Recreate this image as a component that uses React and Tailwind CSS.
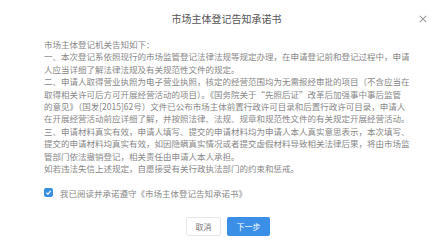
import React, { useState } from "react";

const lines = [
  "市场主体登记机关告知如下：",
  "一、本次登记系依照现行的市场监管登记法律法规等规定办理，在申请登记前和登记过程中，申请",
  "人应当详细了解法律法规及有关规范性文件的规定。",
  "二、申请人取得营业执照为电子营业执照，核定的经营范围均为无需报经审批的项目（不含应当在",
  "取得相关许可后方可开展经营活动的项目）。《国务院关于“先照后证”改革后加强事中事后监管",
  "的意见》（国发[2015]62号）文件已公布市场主体前置行政许可目录和后置行政许可目录，申请人",
  "在开展经营活动前应详细了解，并按照法律、法规、规章和规范性文件的有关规定开展经营活动。",
  "三、申请材料真实有效，申请人填写、提交的申请材料均为申请人本人真实意思表示，本次填写、",
  "提交的申请材料均真实有效，如因隐瞒真实情况或者提交虚假材料导致相关法律后果，将由市场监",
  "管部门依法撤销登记，相关责任由申请人本人承担。",
  "如若违法失信上述规定，自愿接受有关行政执法部门的约束和惩戒。",
];

export default function App() {
  const [agreed, setAgreed] = useState(true);

  return (
    <div
      className="w-[441px] h-[245px] bg-white overflow-hidden"
      style={{ fontFamily: '"Noto Sans CJK SC", "Noto Sans", sans-serif' }}
    >
      {/* Header */}
      <div className="relative h-[38px] flex items-center justify-center pl-[12px]">
        <h2 className="text-[10px] text-[#555] leading-none">市场主体登记告知承诺书</h2>
        <button className="absolute right-[14px] top-[15px] text-[#999]">
          <svg width="8" height="8" viewBox="0 0 10 10">
            <path d="M1 1L9 9M9 1L1 9" stroke="currentColor" strokeWidth="1.3" />
          </svg>
        </button>
      </div>

      {/* Notice text */}
      <div className="pl-[44px] text-[8.5px] leading-[12.4px] text-[#888] whitespace-nowrap">
        {lines.map((line, i) => (
          <p key={i}>{line}</p>
        ))}
      </div>

      {/* Agree checkbox */}
      <label className="mt-[14px] pl-[44px] flex items-center gap-[7px] cursor-pointer">
        <span
          onClick={() => setAgreed(!agreed)}
          className={`w-[9px] h-[9px] rounded-[2px] flex items-center justify-center ${
            agreed ? "bg-[#3b8fe0]" : "border border-[#ccc] bg-white"
          }`}
        >
          {agreed && (
            <svg width="7" height="7" viewBox="0 0 10 10">
              <path d="M2 5.2L4.2 7.3L8.2 2.8" stroke="white" strokeWidth="1.6" fill="none" />
            </svg>
          )}
        </span>
        <span className="text-[8.5px] leading-none text-[#888]">
          我已阅读并承诺遵守《市场主体登记告知承诺书》
        </span>
      </label>

      {/* Buttons */}
      <div className="mt-[20px] flex justify-center gap-[6px] pl-[15px]">
        <button className="w-[35px] h-[19px] rounded-[2px] border border-[#e8e8e8] bg-white text-[8px] text-[#777]">
          取消
        </button>
        <button className="w-[43px] h-[19px] rounded-[2px] bg-[#3b8fe6] text-[8px] text-white">
          下一步
        </button>
      </div>
    </div>
  );
}
